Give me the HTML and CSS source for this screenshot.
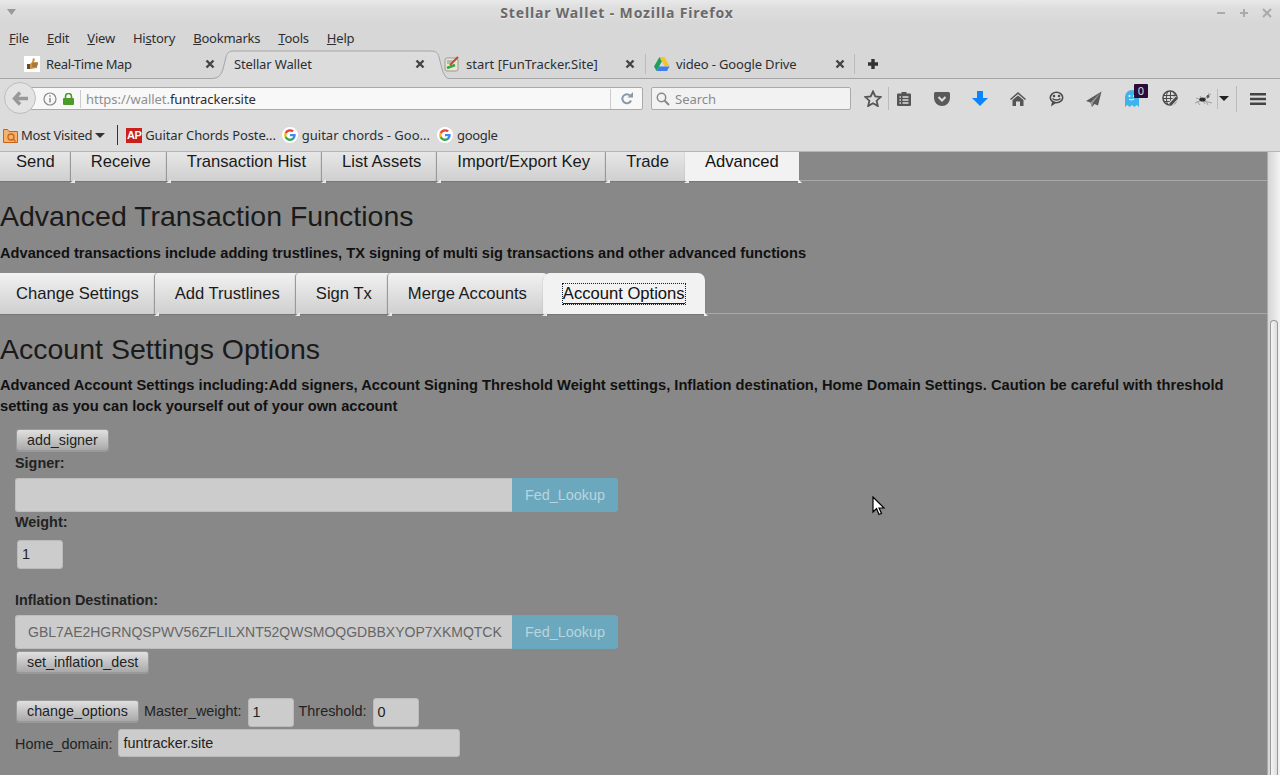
FILE: index.html
```html
<!DOCTYPE html>
<html lang="en">
<head>
<meta charset="utf-8">
<title>Stellar Wallet - Mozilla Firefox</title>
<link rel="stylesheet" href="styles.css">
</head>
<body>
<div class="window">
  <header class="chrome">
    <div class="titlebar">
      <svg class="wm-menu" width="10" height="6" viewBox="0 0 10 6"><path d="M0 0h9L4.500 6z" fill="#999"/></svg>
      <div class="title">Stellar Wallet - Mozilla Firefox</div>
      <div class="wm-buttons">
        <svg width="12" height="12" viewBox="0 0 12 12"><path d="M2 6h8" stroke="#aaa" stroke-width="2"/></svg>
        <svg width="12" height="12" viewBox="0 0 12 12"><path d="M2 6h8M6 2v8" stroke="#aaa" stroke-width="2"/></svg>
        <svg width="12" height="12" viewBox="0 0 12 12"><path d="M2 2l8 8M10 2l-8 8" stroke="#aaa" stroke-width="2"/></svg>
      </div>
    </div>
    <nav class="menubar">
      <span><u>F</u>ile</span><span><u>E</u>dit</span><span><u>V</u>iew</span><span>Hi<u>s</u>tory</span><span><u>B</u>ookmarks</span><span><u>T</u>ools</span><span><u>H</u>elp</span>
    </nav>
    <div class="tabstrip">
      <div class="btab">
        <svg class="fav" width="16" height="16" viewBox="0 0 16 16"><rect width="16" height="16" fill="#fff"/><path d="M3 8h3l2-2 1-4 2 1-1 3h4l-1 6-6 1-4-1z" fill="#c9924f"/><path d="M3 8h3v5H3z" fill="#6b4a2b"/><path d="M8 8h6M8 10h5" stroke="#8a5c2b"/></svg>
        <span class="btab-label btab-label-tight">Real-Time Map</span>
        <svg class="x" width="10" height="10" viewBox="0 0 10 10"><path d="M1.500 1.500l7 7M8.500 1.500l-7 7" stroke="#444" stroke-width="2.400"/></svg>
      </div>
      <div class="btab btab-active">
        <svg class="btab-shape" width="240" height="30" viewBox="0 0 240 30"><path d="M0 28.500C8 28.500 10 25 12 19L15 7C16 3 18 1 23 1H220C225 1 227 3 228 7L231 19C233 25 235 28.500 238 28.500V29.500H0z" fill="#dcdcdc"/><path d="M0 28.500C8 28.500 10 25 12 19L15 7C16 3 18 1 23 1H220C225 1 227 3 228 7L231 19C233 25 235 28.500 238 28.500" fill="none" stroke="#a5a5a5"/></svg>
        <span class="btab-label btab-label-snug">Stellar Wallet</span>
        <svg class="x" width="10" height="10" viewBox="0 0 10 10"><path d="M1.500 1.500l7 7M8.500 1.500l-7 7" stroke="#444" stroke-width="2.400"/></svg>
      </div>
      <div class="btab">
        <svg class="fav" width="16" height="16" viewBox="0 0 16 16"><rect x="1" y="2" width="13" height="13" rx="2" fill="#e9e6d6" stroke="#999"/><path d="M3 12l8-3" stroke="#3aa63a" stroke-width="2.500"/><path d="M6 9l8-8" stroke="#c0482a" stroke-width="2"/><path d="M3 5h6M3 7h4" stroke="#888"/></svg>
        <span class="btab-label">start [FunTracker.Site]</span>
        <svg class="x" width="10" height="10" viewBox="0 0 10 10"><path d="M1.500 1.500l7 7M8.500 1.500l-7 7" stroke="#444" stroke-width="2.400"/></svg>
      </div>
      <div class="btab btab-sep">
        <svg class="fav" width="16" height="16" viewBox="0 0 16 16"><path d="M5.500 1h5l5 9h-5z" fill="#f4c430"/><path d="M5.500 1L0 10.500 2.500 15l5.300-9.500z" fill="#1e9e58"/><path d="M2.500 15h10.500l2.500-4.500H5z" fill="#3d7fe6"/></svg>
        <span class="btab-label btab-label-snug">video - Google Drive</span>
        <svg class="x" width="10" height="10" viewBox="0 0 10 10"><path d="M1.500 1.500l7 7M8.500 1.500l-7 7" stroke="#444" stroke-width="2.400"/></svg>
      </div>
      <svg class="newtab" width="10" height="10" viewBox="0 0 10 10"><path d="M5 0v10M0 5h10" stroke="#333" stroke-width="3.400"/></svg>
    </div>
    <div class="navbar">
      <div class="back"><svg width="17" height="15" viewBox="0 0 17 15"><path d="M8 1.500L2.500 7.500l5.500 6M3 7.500H16" fill="none" stroke="#999" stroke-width="3.400"/></svg></div>
      <div class="urlbar">
        <svg class="url-info" width="14" height="14" viewBox="0 0 14 14"><circle cx="7" cy="7" r="6" fill="none" stroke="#888" stroke-width="1.200"/><path d="M7 6v4.500M7 3.200v1.500" stroke="#888" stroke-width="1.500"/></svg>
        <svg class="url-lock" width="11" height="12" viewBox="0 0 11 12"><path d="M2.500 5V3.500a3 3 0 0 1 6 0V5" fill="none" stroke="#4c9a2a" stroke-width="1.600"/><rect y="5" width="11" height="7" rx="1" fill="#4c9a2a"/></svg>
        <span class="url-text">https://wallet.<b>funtracker.site</b></span>
        <span class="url-reload"><svg width="14" height="13" viewBox="0 0 14 13"><path d="M11 8.500A4.500 4.500 0 1 1 10 3.500" fill="none" stroke="#8a99a6" stroke-width="2"/><path d="M7.500 5.500H13V0z" fill="#8a99a6"/></svg></span>
      </div>
      <div class="searchbar">
        <svg width="14" height="14" viewBox="0 0 14 14"><circle cx="5.500" cy="5.500" r="4.200" fill="none" stroke="#888" stroke-width="1.500"/><path d="M8.500 8.500l4.500 4.500" stroke="#888" stroke-width="2"/></svg>
        <span>Search</span>
      </div>
      <div class="tools">
        <span class="tool tool-star"><svg width="18" height="17" viewBox="0 0 18 17"><path d="M9 1.500l2.300 5 5.300.6-4 3.600 1.200 5.300L9 13.300 4.200 16l1.200-5.300-4-3.600 5.300-.6z" fill="none" stroke="#555" stroke-width="1.800"/></svg></span>
        <span class="tool"><svg width="14" height="15" viewBox="0 0 14 15"><path d="M1 2.500h3.500V1h5v1.500H13a1 1 0 0 1 1 1V14a1 1 0 0 1-1 1H1a1 1 0 0 1-1-1V3.500a1 1 0 0 1 1-1z" fill="#555"/><path d="M2.500 6h1.500M5.500 6h6M2.500 9h1.500M5.500 9h6M2.500 12h1.500M5.500 12h6" stroke="#ddd" stroke-width="1.300"/></svg></span>
        <span class="tool"><svg width="16" height="14" viewBox="0 0 16 14"><path d="M1.500 0h13A1.500 1.500 0 0 1 16 1.500V6a8 8 0 0 1-16 0V1.500A1.500 1.500 0 0 1 1.500 0z" fill="#5a5a5a"/><path d="M4.500 5L8 8.500 11.500 5" fill="none" stroke="#ddd" stroke-width="2"/></svg></span>
        <span class="tool"><svg width="16" height="15" viewBox="0 0 16 15"><path d="M5 0h6v7h5l-8 8-8-8h5z" fill="#0a84ff"/></svg></span>
        <span class="tool"><svg width="16" height="14" viewBox="0 0 16 14"><path d="M8 0L0 7l1 1 7-6 7 6 1-1z" fill="#555"/><path d="M2.500 8L8 3.500 13.500 8v6H10V9.500H6V14H2.500z" fill="#555"/></svg></span>
        <span class="tool"><svg width="15" height="16" viewBox="0 0 15 16"><ellipse cx="7.500" cy="6.500" rx="6.200" ry="5.200" fill="#ddd" stroke="#4a4a4a" stroke-width="1.600"/><path d="M3 11l-1 4.500L7 12z" fill="#4a4a4a"/><circle cx="5" cy="5" r="1.300" fill="#4a4a4a"/><circle cx="10" cy="5" r="1.300" fill="#4a4a4a"/><path d="M3.500 7.500c2 2 6 2 8 0" fill="none" stroke="#4a4a4a" stroke-width="1.400"/></svg></span>
        <span class="tool"><svg width="16" height="16" viewBox="0 0 16 16"><path d="M15.500 .5L0 10l4.500 1.500L6 16l2.500-3 3.500 1.500z" fill="#5a5a5a"/><path d="M15.500 .5L4.500 11.500 6 16l1.200-4.500z" fill="#9a9a9a"/></svg></span>
        <span class="tool tool-ghost"><svg width="14" height="17" viewBox="0 0 14 17"><path d="M0 7a7 7 0 0 1 14 0v10l-2.300-2-2.300 2L7 15l-2.300 2-2.400-2L0 17z" fill="#3fb4ea"/><circle cx="4.500" cy="6" r="1" fill="#fff"/><circle cx="9" cy="6" r="1" fill="#fff"/><path d="M4 9c1.500 1.200 3.500 1.200 5 0" fill="none" stroke="#fff"/></svg><span class="badge">0</span></span>
        <span class="tool"><svg width="17" height="17" viewBox="0 0 17 17"><circle cx="8" cy="8" r="7" fill="none" stroke="#4a4a4a" stroke-width="1.500"/><path d="M1.500 5.500h13M1 8.500h13M2 11.500h9M5.500 1.500C4 6 4 10 5.500 14.500M8.500 1v10M11.500 1.800c1 2 1 4 .6 6" fill="none" stroke="#4a4a4a"/><path d="M8 15L15 7.500" stroke="#ddd" stroke-width="5"/><path d="M8 15L15 7.500" stroke="#4a4a4a" stroke-width="2.800"/></svg></span>
        <span class="tool tool-bug"><svg width="20" height="14" viewBox="0 0 20 14"><path d="M1 11l7-3M2 6l6 2 9-6M10 9l8 2M6 4l5 8M15 1l-2 6M3 9l3 4M12 9l2 4" stroke="#a0a0a0" fill="none"/><ellipse cx="8.500" cy="7.500" rx="3.200" ry="2" fill="#2e2e2e"/><circle cx="14" cy="4.500" r="1.400" fill="#555"/></svg></span>
        <span class="tool-split"></span>
        <svg class="tool-arrow" width="10" height="5" viewBox="0 0 10 5"><path d="M0 0h10L5 5z" fill="#222"/></svg>
        <span class="tool-split tool-split-wide"></span>
        <svg class="hamburger" width="16" height="12" viewBox="0 0 16 12"><path d="M0 1.250h16M0 6h16M0 10.750h16" stroke="#444" stroke-width="2.400"/></svg>
      </div>
    </div>
    <div class="bookmarks">
      <span class="bm bm-folder"><svg width="15" height="15" viewBox="0 0 15 15"><path d="M.5 1.500h4l1.500 2h8.500v11H.5z" fill="#f4b26a" stroke="#c9641a"/><circle cx="8" cy="9" r="3" fill="none" stroke="#c9641a" stroke-width="1.300"/><path d="M10 11l2.500 2.500" stroke="#c9641a" stroke-width="1.300"/></svg><span class="bm-tight">Most Visited</span><svg class="bm-arrow" width="10" height="5" viewBox="0 0 10 5"><path d="M0 0h10L5 5z" fill="#333"/></svg></span>
      <span class="bm-sep"></span>
      <span class="bm bm-ap"><span class="ap">AP</span>Guitar Chords Poste...</span>
      <span class="bm bm-g"><svg width="16" height="16" viewBox="0 0 16 16"><circle cx="8" cy="8" r="8" fill="#fff"/><path d="M13.700 8.100c0-.4 0-.8-.1-1.200H8v2.300h3.200c-.1.700-.6 1.400-1.200 1.800v1.500h1.900c1.100-1 1.800-2.500 1.800-4.400z" fill="#4285f4"/><path d="M8 13.900c1.600 0 2.900-.5 3.900-1.400L10 11c-.5.400-1.200.6-2 .6-1.500 0-2.800-1-3.300-2.400H2.800v1.500c1 2 3 3.200 5.200 3.200z" fill="#34a853"/><path d="M4.700 9.200a3.500 3.500 0 0 1 0-2.400V5.300H2.800a5.900 5.900 0 0 0 0 5.400z" fill="#fbbc05"/><path d="M8 4.400c.9 0 1.600.3 2.200.9l1.700-1.700A5.900 5.900 0 0 0 2.800 5.300l1.900 1.500C5.200 5.400 6.500 4.400 8 4.400z" fill="#ea4335"/></svg>guitar chords - Goo...</span>
      <span class="bm bm-g"><svg width="16" height="16" viewBox="0 0 16 16"><circle cx="8" cy="8" r="8" fill="#fff"/><path d="M13.700 8.100c0-.4 0-.8-.1-1.200H8v2.300h3.200c-.1.700-.6 1.400-1.200 1.800v1.500h1.900c1.100-1 1.800-2.500 1.800-4.400z" fill="#4285f4"/><path d="M8 13.900c1.600 0 2.900-.5 3.900-1.400L10 11c-.5.400-1.200.6-2 .6-1.500 0-2.800-1-3.300-2.400H2.800v1.500c1 2 3 3.200 5.200 3.200z" fill="#34a853"/><path d="M4.700 9.200a3.500 3.500 0 0 1 0-2.400V5.300H2.800a5.900 5.900 0 0 0 0 5.400z" fill="#fbbc05"/><path d="M8 4.400c.9 0 1.600.3 2.200.9l1.700-1.700A5.900 5.900 0 0 0 2.800 5.300l1.900 1.500C5.200 5.400 6.500 4.400 8 4.400z" fill="#ea4335"/></svg><span class="bm-tight">google</span></span>
    </div>
  </header>
  <div class="viewport">
    <main class="page">
      <ul class="tabs tabs-top">
        <li>Send</li><li>Receive</li><li>Transaction Hist</li><li>List Assets</li><li>Import/Export Key</li><li>Trade</li><li class="on">Advanced</li>
      </ul>
      <h1 class="h1-first">Advanced Transaction Functions</h1>
      <p class="lead lead-first">Advanced transactions include adding trustlines, TX signing of multi sig transactions and other advanced functions</p>
      <ul class="tabs tabs-sub">
        <li>Change Settings</li><li>Add Trustlines</li><li>Sign Tx</li><li>Merge Accounts</li><li class="on"><span class="focus">Account Options</span></li>
      </ul>
      <h1 class="h1-second">Account Settings Options</h1>
      <p class="lead lead-second">Advanced Account Settings including:Add signers, Account Signing Threshold Weight settings, Inflation destination, Home Domain Settings. Caution be careful with threshold setting as you can lock yourself out of your own account</p>
      <form class="form">
        <button type="button" class="btn btn-signer">add_signer</button>
        <div class="label label-signer">Signer:</div>
        <div class="group"><div class="field"></div><div class="fed">Fed_Lookup</div></div>
        <div class="label label-weight">Weight:</div>
        <div class="small-input small-weight">1</div>
        <div class="label label-inflation">Inflation Destination:</div>
        <div class="group"><div class="field field-muted">GBL7AE2HGRNQSPWV56ZFLILXNT52QWSMOQGDBBXYOP7XKMQTCK</div><div class="fed">Fed_Lookup</div></div>
        <button type="button" class="btn btn-inflation">set_inflation_dest</button>
        <div class="row row-options">
          <button type="button" class="btn">change_options</button>
          <span class="plain">Master_weight:</span><div class="small-input">1</div>
          <span class="plain">Threshold:</span><div class="small-input">0</div>
        </div>
        <div class="row row-domain">
          <span class="plain">Home_domain:</span><div class="domain">funtracker.site</div>
        </div>
      </form>
    </main>
    <div class="scrollbar"><div class="thumb"></div></div>
  </div>
  <svg class="cursor" width="14" height="20" viewBox="0 0 14 20"><path d="M1 1v15l3.500-3.500L7 18.500l2.500-1-2.500-5.500h5z" fill="#fff" stroke="#000" stroke-width="1.200"/></svg>
</div>
</body>
</html>
```
FILE: styles.css
```css
* { box-sizing: border-box; }
html, body { margin: 0; padding: 0; height: 100%; overflow: hidden; }
.window { position: relative; width: 1280px; height: 775px; display: flex; flex-direction: column; overflow: hidden; }

.chrome { height: 152px; flex: none; background: #d7d7d7; font-family: "Noto Sans", sans-serif; font-size: 13px; color: #2b2f33; }
.titlebar { position: relative; height: 26px; background: linear-gradient(#e9e9e9 0, #dedede 8px, #d7d7d7 24px); display: flex; align-items: center; }
.wm-menu { margin: 0 0 2px 7px; }
.title { position: absolute; left: 0; right: 46px; top: 4px; text-align: center; font-weight: 700; font-size: 14px; letter-spacing: .85px; color: #6a6a6a; text-shadow: 0 1px 0 #eee; line-height: 18px; }
.wm-buttons { margin-left: auto; display: flex; gap: 11px; padding-right: 7px; margin-top: -1px; }
.menubar { height: 24px; display: flex; gap: 18px; padding-left: 9px; align-items: center; line-height: 22px; letter-spacing: -.22px; }
.tabstrip { position: relative; height: 29px; padding-left: 15px; display: flex; align-items: center; border-bottom: 1px solid #a5a5a5; }
.btab { position: relative; width: 210px; height: 28px; display: flex; align-items: center; padding-left: 9px; flex: none; }
.btab-sep::before, .btab-sep::after { content: ""; position: absolute; top: 4px; height: 20px; width: 1px; background: #bbb; }
.btab-sep::before { left: 0; }
.btab-sep::after { right: 0; }
.btab-shape { position: absolute; left: -14px; top: 0; }
.fav { flex: none; margin-right: 6px; }
.btab-label { position: relative; flex: 1; }
.btab-label-tight { letter-spacing: -.35px; }
.btab-label-snug { letter-spacing: -.15px; }
.x { position: relative; flex: none; margin-right: 10px; }
.newtab { margin-left: 13px; }
.navbar { position: relative; height: 41px; background: #dcdcdc; display: flex; align-items: flex-start; padding-top: 8px; }
.back { position: absolute; left: 4px; top: 3px; z-index: 2; width: 32px; height: 32px; border-radius: 50%; background: #e3e3e3; border: 1px solid #bdbdbd; display: flex; align-items: center; justify-content: center; }
.urlbar { margin-left: 30px; width: 613px; height: 23px; border: 1px solid #aaa; border-radius: 2px; background: #f8f8f8; display: flex; align-items: center; padding-left: 12px; }
.url-info { flex: none; margin-right: 6px; }
.url-lock { flex: none; margin-right: 6px; }
.url-text { flex: 1; color: #8f8f8f; border-left: 1px solid #ccc; padding-left: 5px; line-height: 18px; letter-spacing: -.04px; }
.url-text b { font-weight: 400; color: #2b2b2b; }
.url-reload { flex: none; width: 32px; height: 20px; border-left: 1px solid #ccc; display: flex; align-items: center; justify-content: center; }
.searchbar { margin-left: 8px; width: 200px; height: 23px; border: 1px solid #aaa; border-radius: 2px; background: #f2f2f2; display: flex; align-items: center; padding-left: 4px; gap: 5px; color: #8a8a8a; }
.tools { display: flex; align-items: center; height: 23px; margin-left: 7px; gap: 8px; }
.tool { position: relative; width: 30px; height: 23px; flex: none; display: flex; align-items: center; justify-content: center; }
.tool-star { margin-right: -8px; border-right: 1px solid #bbb; width: 31px; padding-right: 1px; }
.tool-bug { margin-left: -4px; }
.badge { position: absolute; left: 17px; top: -3px; width: 14px; height: 14px; background: #2d0b38; color: #ddd; font-size: 11px; line-height: 14px; text-align: center; border-radius: 1px; }
.tool-split { flex: none; width: 1px; height: 20px; background: #bbb; margin-left: -10px; }
.tool-arrow { flex: none; margin-left: -7px; }
.tool-split-wide { height: 26px; margin-left: -1px; }
.hamburger { flex: none; margin-left: 5px; }
.bookmarks { height: 32px; background: #dcdcdc; display: flex; align-items: center; border-bottom: 1px solid #b5b5b5; padding-bottom: 1px; }
.bm { display: flex; align-items: center; white-space: nowrap; }
.bm-tight { letter-spacing: -.3px; }
.bm-folder { padding-left: 3px; }
.bm-folder svg:first-child { margin-right: 3px; }
.bm-arrow { margin-left: 3px; }
.bm-sep { width: 1px; height: 20px; background: #333; margin: 0 8px 0 12px; }
.ap { width: 16px; height: 15px; margin-right: 3px; background: #c9201f; color: #fff; font: 700 11px/15px "Liberation Sans", sans-serif; letter-spacing: -.5px; text-align: center; }
.bm-ap { margin-right: -1px; letter-spacing: -.1px; }
.bm-g { margin-left: 7px; }
.bm-g svg { margin-right: 4px; }

.viewport { flex: 1; min-height: 0; display: flex; overflow: hidden; }
.page { flex: 1; min-width: 0; background: #888; font-family: "Liberation Sans", sans-serif; color: #111; overflow: hidden; }
.scrollbar { flex: none; width: 13px; background: linear-gradient(90deg, #d5d5d5, #f3f3f3); border-left: 1px solid #aaa; padding: 168px 2px 0 2px; }
.thumb { height: 100%; background: linear-gradient(90deg, #f5f5f5, #ddd); border: 1px solid #999; border-bottom: 0; border-radius: 5px 5px 0 0; }

.tabs { display: flex; list-style: none; margin: 0; padding: 0; border-bottom: 1px solid #a8a8a8; height: 41px; }
.tabs li { position: relative; height: 41px; padding: 0 20px; margin-left: -5px; font-size: 16.6px; line-height: 41px; white-space: nowrap; color: #1a1a1a; background: linear-gradient(#f1f1f1, #cfcfcf); border-left: 1px solid #999; border-radius: 4px 4px 0 0; box-shadow: 0 1px 1px #777; }
.tabs li:first-child { border-left: 0; margin-left: -4px; }
.tabs li::before { content: ""; position: absolute; left: -1px; bottom: -2px; width: 0; height: 0; border-style: solid; border-width: 0 0 4px 5px; border-color: transparent transparent #e8e8e8 transparent; }
.tabs li.on { background: #f2f2f2; color: #111; border-left: 0; margin-left: -4px; border-radius: 7px 7px 0 0; }
.tabs li.on::after { content: ""; position: absolute; right: -3px; bottom: -2px; width: 0; height: 0; border-style: solid; border-width: 4px 0 0 4px; border-color: transparent transparent transparent #f2f2f2; }
.tabs-top { margin-top: -12px; }
.tabs-top li { line-height: 43px; }
.focus { outline: 1px dotted #123; border-bottom: 1px solid #124; }
h1 { margin: 0; font-weight: 400; font-size: 28.5px; line-height: 34px; color: #1a1a1a; }
.h1-first { margin-top: 18px; }
.h1-second { margin-top: 18px; }
.lead { margin: 0; font-weight: 700; font-size: 14.64px; line-height: 21px; color: #111; }
.lead-first { margin-top: 10px; margin-bottom: 9px; }
.lead-second { margin-top: 9px; font-size: 14.7px; }

.form { padding: 12px 0 0 15px; font-size: 14.4px; color: #222; }
.btn { display: block; height: 22px; padding: 0 10px; margin: 0 0 0 1px; border: 1px solid #999; border-radius: 3px; background: linear-gradient(#e0e0e0, #a9a9a9); font: 14.3px/20px "Liberation Sans", sans-serif; color: #222; box-shadow: 0 1px 0 #999; }
.label { font-weight: 700; line-height: 20px; color: #222; }
.label-signer { margin-top: 2px; height: 20px; margin-bottom: 5px; }
.label-weight { height: 20px; }
.label-inflation { margin-top: 21px; height: 20px; margin-bottom: 5px; }
.group { display: flex; width: 603px; height: 34px; }
.field { flex: 1; min-width: 0; background: #ccc; border: 1px solid #bdbdbd; border-right: 0; border-radius: 3px 0 0 3px; padding-left: 12px; font-size: 14px; line-height: 32px; white-space: nowrap; overflow: hidden; color: #666; }
.fed { flex: none; width: 106px; background: #6ca8bd; border-radius: 0 3px 3px 0; color: #b9d4de; font-size: 14.4px; line-height: 34px; text-align: center; }
.small-input { flex: none; width: 46px; height: 29px; background: #ccc; border: 1px solid #bbb; border-radius: 3px; padding-left: 4px; line-height: 26px; color: #222; }
.small-weight { margin: 8px 0 0 2px; }
.btn-inflation { margin-top: 2px; }
.row { display: flex; }
.row-options { margin-top: 25px; height: 29px; align-items: flex-start; }
.row-options .btn { flex: none; margin-top: 2px; }
.plain { line-height: 20px; color: #222; white-space: nowrap; }
.row-options .plain { margin: 3px 6px 0 5px; }
.row-options .small-input + .plain { margin-left: 5px; }
.row-domain { height: 28px; margin-top: 2px; align-items: center; }
.row-domain .plain { padding-top: 1px; }
.domain { width: 342px; height: 28px; margin-left: 5px; background: #ccc; border: 1px solid #bbb; border-radius: 3px; padding-left: 5px; line-height: 27px; color: #222; }
.cursor { position: absolute; left: 872px; top: 496px; }
```
